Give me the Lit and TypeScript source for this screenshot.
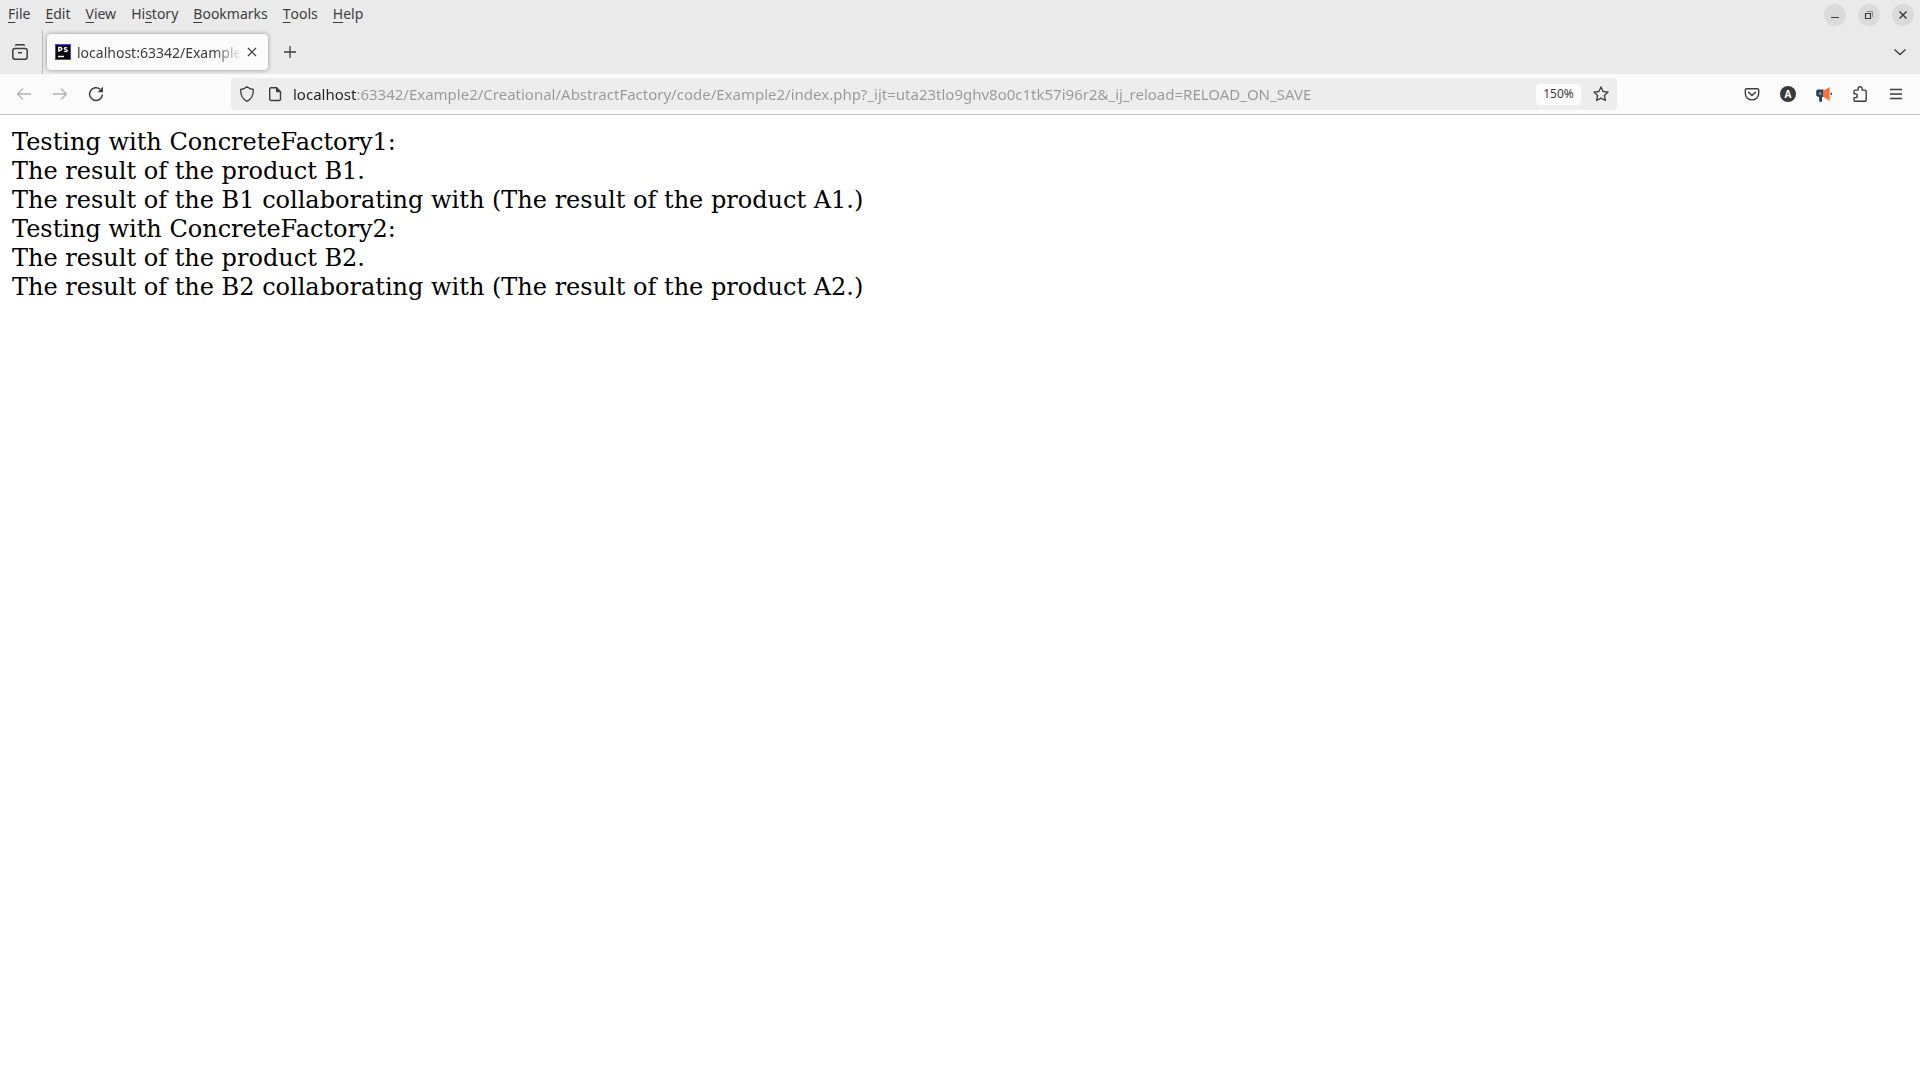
import { LitElement, html, css, svg } from "lit";
import { customElement } from "lit/decorators.js";

const icon = (body: unknown, size = 16) =>
  html`<svg width=${size} height=${size} viewBox="0 0 ${size} ${size}" fill="none" stroke="currentColor" aria-hidden="true">${body}</svg>`;

const icons = {
  view: icon(svg`<path d="M3.2 1.6Q3.8.7 5 .7h6q1.2 0 1.8.9" stroke-width="1.4"/><rect x=".8" y="4.4" width="14.4" height="10.8" rx="2.2" stroke-width="1.5"/><path d="M6 8.7h4" stroke-width="1.5"/>`),
  favicon: icon(svg`<rect x=".5" y=".5" width="15" height="15" fill="#000" stroke="#5a3fd6"/><path d="M3.8 8V3.5h1.6a1.4 1.4 0 0 1 0 2.9H3.8M12.1 4.1c-.9-.9-2.8-.7-2.8.4 0 1.400 3 .7 3 2.100 0 1.300-2.200 1.300-3.200.3M3 12.500h6" stroke="#fff" stroke-width="1.300"/>`),
  close: icon(svg`<path d="M4 4l8 8M12 4l-8 8" stroke-width="1.200"/>`),
  plus: icon(svg`<path d="M8 2v12M2 8h12" stroke-width="1.300"/>`),
  chevron: icon(svg`<path d="M2.500 5.500L8 10.500l5.500-5" stroke-width="1.400"/>`),
  back: icon(svg`<path d="M15 8H1.800M7 2.500L1.500 8 7 13.500" stroke-width="1.300"/>`),
  forward: icon(svg`<path d="M1 8h13.200M9 2.500L14.500 8 9 13.500" stroke-width="1.300"/>`),
  reload: icon(svg`<path d="M12.300 3.300A6.400 6.400 0 1 0 14.400 8.500" stroke-width="1.500"/><path d="M15 .8v5.400H9.600z" fill="currentColor" stroke="none"/>`),
  shield: icon(svg`<path d="M8 .8C9.800 2.300 12 3.200 14.300 3.500C14.600 9 12.500 13.200 8 15.300C3.500 13.200 1.400 9 1.700 3.500C4 3.200 6.200 2.300 8 .8z" stroke-width="1.300" stroke-linejoin="round"/>`),
  page: icon(svg`<path d="M9.500 1.700H4a1.300 1.300 0 0 0-1.300 1.300v10.200A1.300 1.300 0 0 0 4 14.500h8.200a1.300 1.300 0 0 0 1.300-1.300V5.700z" stroke-width="1.400"/><path d="M9 1.500v4.700h4.700z" fill="currentColor" stroke="none"/>`),
  star: icon(svg`<path d="M8 .9l2.100 4.600 5 .6-3.700 3.400 1 5L8 12.100l-4.400 2.400 1-5L.9 6.100l5-.6z" stroke-width="1.300" stroke-linejoin="round"/>`),
  pocket: icon(svg`<path d="M2.600 2.700h10.800a1.300 1.300 0 0 1 1.300 1.300v3.200a6.700 6.700 0 0 1-13.400 0V4a1.300 1.300 0 0 1 1.300-1.300z" stroke-width="1.400"/><path d="M4.500 6.300L8 9.500l3.500-3.200" stroke-width="1.500" stroke-linecap="round" stroke-linejoin="round"/>`),
  horn: icon(svg`<path d="M.2 5.200Q.4 3.500 2 3.400h5.500v7.600H6V15.800H3.200v-5Q.2 10.700.2 8.700z" fill="#23415c" stroke="none"/><circle cx="4.300" cy="7.500" r="1.800" fill="#77828c" stroke="none"/><path d="M7.300 4.600L13.800 1.300v13.700L7.300 10.800z" fill="#ff7038" stroke="none"/><path d="M14.300 .8v14.400" stroke="#d5edf7"/><path d="M15.400 6.800v2.200" stroke="#23415c" stroke-width="1.200"/>`),
  puzzle: icon(svg`<path d="M2 6V5.300a1.200 1.200 0 0 1 1.200-1.200h2.900V2.700a2 2 0 0 1 4 0v1.400h2.800a1.300 1.300 0 0 1 1.300 1.300v8.700a1.200 1.200 0 0 1-1.200 1.200H3.200A1.200 1.200 0 0 1 2 14.100v-2.500h1.300a1.900 1.900 0 0 0 0-3.800H2z" stroke-width="1.400" stroke-linejoin="round"/>`),
  menu: icon(svg`<path d="M2 3.500h12M2 8h12M2 12.500h12" stroke-width="1.300"/>`),
  minimize: icon(svg`<path d="M4 10.500h8"/>`),
  restore: icon(svg`<path d="M4.500 6.500h5v5h-5z" stroke-width="1.200"/><path d="M6 4.500h5.500V10" stroke="#8c8c8c"/>`),
  quit: icon(svg`<path d="M4.500 4.500l7 7M11.500 4.500l-7 7" stroke-width="1.500"/>`),
};

const menus: [string, string, string][] = [
  ["", "F", "ile"],
  ["", "E", "dit"],
  ["", "V", "iew"],
  ["Hi", "s", "tory"],
  ["", "B", "ookmarks"],
  ["", "T", "ools"],
  ["", "H", "elp"],
];

const address =
  "localhost:63342/Example2/Creational/AbstractFactory/code/Example2/index.php?_ijt=uta23tlo9ghv8o0c1tk57i96r2&_ij_reload=RELOAD_ON_SAVE";

const output = [
  "Testing with ConcreteFactory1:",
  "The result of the product B1.",
  "The result of the B1 collaborating with (The result of the product A1.)",
  "Testing with ConcreteFactory2:",
  "The result of the product B2.",
  "The result of the B2 collaborating with (The result of the product A2.)",
];

@customElement("app-root")
export class AppRoot extends LitElement {
  static styles = css`
    :host {
      display: flex;
      flex-direction: column;
      min-height: 100vh;
      background: #fff;
      color: #3d3d3d;
      font: 14px/20px "Noto Sans", "Open Sans", sans-serif;
    }
    * { box-sizing: border-box; }
    button {
      display: flex;
      align-items: center;
      justify-content: center;
      padding: 0;
      border: 0;
      background: none;
      color: inherit;
      font: inherit;
      flex: none;
    }
    svg { display: block; flex: none; }
    .menubar {
      display: flex;
      align-items: center;
      gap: 1px;
      height: 30px;
      padding-left: 1px;
      background: #eaeaea;
    }
    .menu { padding: 0 7px 2px; height: 28px; white-space: pre; }
    .key { text-decoration: underline 1px; text-underline-offset: 3px; }
    .window { display: flex; gap: 12px; margin-left: auto; padding-right: 6px; }
    .window button {
      width: 22px;
      height: 22px;
      border-radius: 50%;
      background: #dadada;
    }
    .tabs {
      display: flex;
      align-items: center;
      height: 44px;
      padding-right: 4px;
      background: #eaeaea;
    }
    .square { width: 32px; height: 32px; }
    .view { width: 42px; padding-right: 2px; }
    .tab {
      display: flex;
      align-items: center;
      width: 221px;
      height: 36px;
      margin: 0 6px 0 4px;
      padding: 0 6px 0 8px;
      border-radius: 4px;
      background: #fbfbfb;
      box-shadow: 0 0 4px rgba(0, 0, 0, 0.4);
    }
    .divider { width: 1px; height: 44px; background: #b9b9b9; }
    .title {
      flex: 1;
      min-width: 0;
      padding: 2px 0 0 6px;
      white-space: nowrap;
      mask-image: linear-gradient(to left, transparent, #000 28px);
    }
    .tab button { width: 20px; height: 20px; }
    .all { margin-left: auto; }
    .nav {
      display: flex;
      align-items: center;
      height: 41px;
      padding: 0 6px;
      border-bottom: 1px solid #c4c4c4;
      background: #fbfbfb;
    }
    .nav > button { width: 36px; height: 32px; }
    .nav button:disabled { color: #b3b3b3; }
    .spacer { flex: 0 1 117px; }
    .urlbar {
      display: flex;
      align-items: center;
      flex: 1;
      min-width: 0;
      height: 32px;
      padding: 0 2px;
      border-radius: 4px;
      background: #ededed;
    }
    .urlbar button { width: 28px; height: 28px; }
    .urlbar input {
      flex: 1;
      min-width: 0;
      height: 28px;
      margin-left: 4px;
      padding: 0;
      border: 0;
      outline: 0;
      font: inherit;
      font-size: 15px;
      color: transparent;
      caret-color: #222;
      background: linear-gradient(to right, #222 63px, #999 63px);
      -webkit-background-clip: text;
      background-clip: text;
    }
    .urlbar .zoom {
      width: 45px;
      height: 21px;
      margin-right: 6px;
      border-radius: 4px;
      background: #fbfbfb;
      font-size: 12px;
    }
    .account {
      width: 16px;
      height: 16px;
      border-radius: 50%;
      background: #3a3a3a;
      color: #fff;
      font-size: 10px;
      font-weight: 700;
      line-height: 16px;
    }
    .page {
      flex: 1;
      padding: 13px 12px;
      color: #000;
      font: 24px/29px "DejaVu Serif", serif;
    }
    .line { margin: 0; }
  `;

  render() {
    return html`
      <nav class="menubar" aria-label="Menu bar">
        ${menus.map(([before, key, after]) => html`<button class="menu">${before}<span class="key">${key}</span>${after}</button>`)}
        <div class="window">
          <button aria-label="Minimize">${icons.minimize}</button>
          <button aria-label="Restore">${icons.restore}</button>
          <button aria-label="Close window">${icons.quit}</button>
        </div>
      </nav>
      <div class="tabs">
        <button class="square view" aria-label="View">${icons.view}</button>
        <span class="divider"></span>
        <div class="tab">
          ${icons.favicon}
          <span class="title">localhost:63342/Example</span>
          <button aria-label="Close tab">${icons.close}</button>
        </div>
        <button class="square" aria-label="New tab">${icons.plus}</button>
        <button class="square all" aria-label="List all tabs">${icons.chevron}</button>
      </div>
      <div class="nav">
        <button disabled aria-label="Back">${icons.back}</button>
        <button disabled aria-label="Forward">${icons.forward}</button>
        <button aria-label="Reload">${icons.reload}</button>
        <span class="spacer"></span>
        <div class="urlbar">
          <button aria-label="Tracking protection">${icons.shield}</button>
          <button aria-label="Site information">${icons.page}</button>
          <input type="text" aria-label="Address" spellcheck="false" .value=${address} />
          <button class="zoom">150%</button>
          <button aria-label="Bookmark this page">${icons.star}</button>
        </div>
        <span class="spacer"></span>
        <button aria-label="Pocket">${icons.pocket}</button>
        <button aria-label="Account"><span class="account">A</span></button>
        <button aria-label="Extension">${icons.horn}</button>
        <button aria-label="Extensions">${icons.puzzle}</button>
        <button aria-label="Application menu">${icons.menu}</button>
      </div>
      <main class="page">
        ${output.map((line) => html`<p class="line">${line}</p>`)}
      </main>
    `;
  }
}
